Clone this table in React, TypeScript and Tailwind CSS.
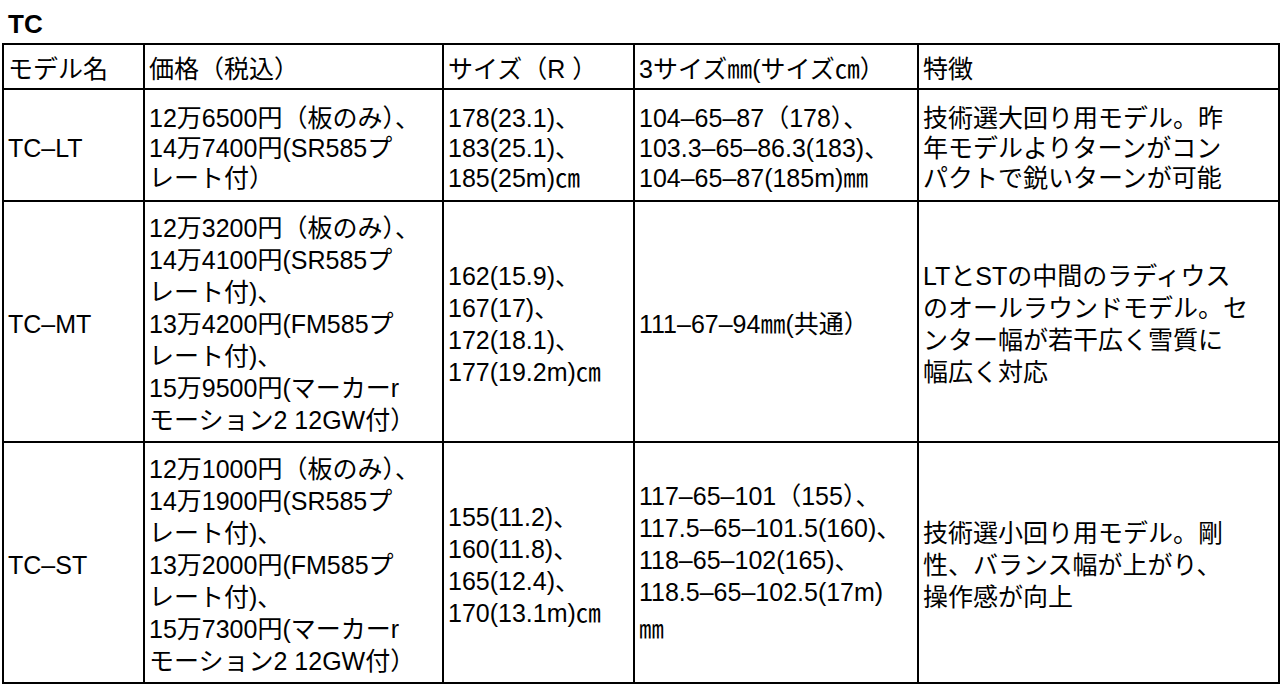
import React from 'react';

type Row = {
    height: string;
    leading: string;
    cells: string[][];
};

const header = ['モデル名', '価格（税込）', 'サイズ（R ）', '3サイズ㎜(サイズ㎝）', '特徴'];

const rows: Row[] = [
    {
        height: 'h-[112px]',
        leading: 'leading-[30px]',
        cells: [
            ['TC–LT'],
            ['12万6500円（板のみ）、', '14万7400円(SR585プ', 'レート付）'],
            ['178(23.1)、', '183(25.1)、', '185(25m)㎝'],
            ['104–65–87（178）、', '103.3–65–86.3(183)、', '104–65–87(185m)㎜'],
            ['技術選大回り用モデル。昨', '年モデルよりターンがコン', 'パクトで鋭いターンが可能'],
        ],
    },
    {
        height: 'h-[241px]',
        leading: 'leading-[32px]',
        cells: [
            ['TC–MT'],
            [
                '12万3200円（板のみ）、',
                '14万4100円(SR585プ',
                'レート付)、',
                '13万4200円(FM585プ',
                'レート付)、',
                '15万9500円(マーカーr',
                'モーション2 12GW付）',
            ],
            ['162(15.9)、', '167(17)、', '172(18.1)、', '177(19.2m)㎝'],
            ['111–67–94㎜(共通）'],
            ['LTとSTの中間のラディウス', 'のオールラウンドモデル。セ', 'ンター幅が若干広く雪質に', '幅広く対応'],
        ],
    },
    {
        height: 'h-[241px]',
        leading: 'leading-[32px]',
        cells: [
            ['TC–ST'],
            [
                '12万1000円（板のみ）、',
                '14万1900円(SR585プ',
                'レート付)、',
                '13万2000円(FM585プ',
                'レート付)、',
                '15万7300円(マーカーr',
                'モーション2 12GW付）',
            ],
            ['155(11.2)、', '160(11.8)、', '165(12.4)、', '170(13.1m)㎝'],
            ['117–65–101（155）、', '117.5–65–101.5(160)、', '118–65–102(165)、', '118.5–65–102.5(17m)', '㎜'],
            ['技術選小回り用モデル。剛', '性、バランス幅が上がり、', '操作感が向上'],
        ],
    },
];

export default function App() {
    return (
        <div className="w-[1280px] h-[686px] bg-white text-black font-['Liberation_Sans','Noto_Sans_CJK_JP',sans-serif] overflow-hidden">
            {/* タイトル */}
            <div className="h-[43px] pt-[11px] pl-[8px] text-[26px] leading-none font-bold">TC</div>

            <table className="ml-[2px] w-[1276px] table-fixed border-collapse border-2 border-black text-[25px]">
                <colgroup>
                    <col className="w-[141px]" />
                    <col className="w-[299px]" />
                    <col className="w-[191px]" />
                    <col className="w-[284px]" />
                    <col className="w-[361px]" />
                </colgroup>
                <thead>
                    <tr className="h-[45px]">
                        {header.map((h) => (
                            <th
                                key={h}
                                className="border-2 border-black pl-[4px] pt-[5px] text-left font-normal align-middle leading-[30px] whitespace-nowrap"
                            >
                                {h}
                            </th>
                        ))}
                    </tr>
                </thead>
                <tbody>
                    {rows.map((row, i) => (
                        <tr key={i} className={row.height}>
                            {row.cells.map((lines, j) => (
                                <td
                                    key={j}
                                    className={`border-2 border-black pl-[4px] pt-[5px] align-middle whitespace-nowrap ${row.leading}`}
                                >
                                    {lines.map((line, k) =>
                                        line === '㎜' ? (
                                            <div key={k} className="leading-[42px]">
                                                {line}
                                            </div>
                                        ) : (
                                            <div key={k}>{line}</div>
                                        )
                                    )}
                                </td>
                            ))}
                        </tr>
                    ))}
                </tbody>
            </table>
        </div>
    );
}
